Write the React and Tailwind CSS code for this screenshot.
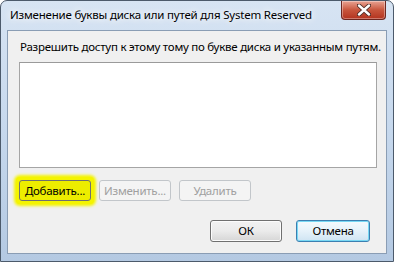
export default function App() {
  const font = { fontFamily: '"Noto Sans", "Open Sans", sans-serif' };
  return (
    <div className="w-[394px] h-[262px] bg-white" style={font}>
      {/* Window frame */}
      <div className="relative flex h-full w-full flex-col rounded-t-[7px] border border-[#4c5a6b] bg-gradient-to-b from-[#d7e4f3] via-[#c6d8ed] to-[#b4c9e2] px-[6px] pb-[7px]">
        {/* Title bar */}
        <div className="flex h-[29px] items-center justify-between">
          <span className="whitespace-nowrap pl-[3px] pb-[2px] text-[11.5px] tracking-[-0.2px] text-black [text-shadow:0_0_6px_#ffffff,0_0_10px_#ffffff]">
            Изменение буквы диска или путей для System Reserved
          </span>
          <div className="mb-[9px] mr-[1px] flex h-[19px] w-[45px] items-center justify-center self-start rounded-b-[4px] border border-t-0 border-[#6d2720] bg-gradient-to-b from-[#e8a393] via-[#c8553c] to-[#b3321e] shadow-[inset_0_0_0_1px_rgba(255,255,255,0.35)]">
            <svg width="14" height="12" viewBox="0 0 14 12">
              <path d="M2 1.5 L12 10.5 M12 1.5 L2 10.5" stroke="#4a2a24" strokeWidth="4.2" strokeLinecap="round" />
              <path d="M2 1.5 L12 10.5 M12 1.5 L2 10.5" stroke="#ffffff" strokeWidth="2.4" strokeLinecap="round" />
            </svg>
          </div>
        </div>

        {/* Client area */}
        <div className="flex flex-1 flex-col border border-[#8a9db4] bg-[#f0f0f0] pl-[11px] pr-[9px] pt-[8px] text-[11.5px] tracking-[-0.25px] text-black">
          <p className="whitespace-nowrap pl-[1px] leading-[16px]">Разрешить доступ к этому тому по букве диска и указанным путям.</p>
          <div className="mt-[7px] h-[106px] w-[358px] border border-[#a5a5a5] border-t-[#9a9a9a] bg-white" />

          <div className="mt-[12px] flex gap-[8px]">
            <div className="-m-[3px] rounded-[4px] bg-[#f4f400] p-[3px] shadow-[0_0_3px_2px_#f4f400]">
              <button className="flex h-[21px] w-[72px] items-center justify-center rounded-[3px] border border-[#707070] bg-[#eded00] leading-none">
                Добавить...
              </button>
            </div>
            <button className="flex h-[21px] w-[72px] items-center justify-center rounded-[3px] border border-[#c2c6ca] bg-[#f4f4f4] leading-none text-[#a0a0a0]">
              Изменить...
            </button>
            <button className="flex h-[21px] w-[72px] items-center justify-center rounded-[3px] border border-[#c2c6ca] bg-[#f4f4f4] leading-none text-[#a0a0a0]">
              Удалить
            </button>
          </div>

          <div className="mt-[19px] flex justify-end gap-[14px] pr-[7px]">
            <button className="flex h-[22px] w-[72px] items-center justify-center rounded-[3px] border border-[#707070] bg-gradient-to-b from-[#f2f2f2] via-[#ebebeb] to-[#d6d6d6] leading-none shadow-[inset_0_0_0_1px_#fcfcfc]">
              ОК
            </button>
            <button className="flex h-[22px] w-[74px] items-center justify-center rounded-[3px] border border-[#3c7fb1] bg-gradient-to-b from-[#f4fafd] via-[#e6f2fa] to-[#cfe4f3] leading-none shadow-[inset_0_0_0_1px_#78d8f4]">
              Отмена
            </button>
          </div>
        </div>
      </div>
    </div>
  );
}
